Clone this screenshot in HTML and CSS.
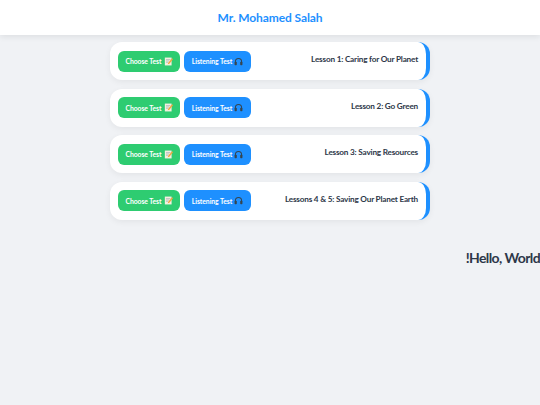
FILE: index.html
```html
<!DOCTYPE html>
<html lang="ar" dir="rtl">
<head>
<meta charset="utf-8">
<title>Mr. Mohamed Salah</title>
<link rel="stylesheet" href="styles.css">
</head>
<body>
<svg class="defs" width="0" height="0" aria-hidden="true">
  <symbol id="memo" viewBox="0 0 16 16">
    <rect x="1.5" y="1" width="12" height="14" fill="#f4efe0"/>
    <path d="M3.5 4.5h8M3.5 7h6M3.5 9.5h4" stroke="#9aa4ad" stroke-width="1"/>
    <path d="M14.5 2 7.5 10 6.5 13 9.5 11.8 16 4z" fill="#f2a53a"/>
  </symbol>
  <symbol id="phones" viewBox="0 0 16 16">
    <path d="M2.5 10V8a5.5 5.5 0 0 1 11 0v2" fill="none" stroke="#36454f" stroke-width="1.8"/>
    <rect x="1" y="8.5" width="4" height="6" rx="1.3" fill="#36454f"/>
    <rect x="11" y="8.5" width="4" height="6" rx="1.3" fill="#36454f"/>
  </symbol>
</svg>
<header class="site-header"><h1 class="site-title" dir="ltr">Mr. Mohamed Salah</h1></header>
<main class="lessons">
  <article class="lesson">
    <h2 class="lesson-title" dir="ltr">Lesson 1: Caring for Our Planet</h2>
    <div class="actions">
      <a class="btn btn-listen" dir="ltr">Listening Test<svg class="ico"><use href="#phones"/></svg></a>
      <a class="btn btn-choose" dir="ltr">Choose Test<svg class="ico"><use href="#memo"/></svg></a>
    </div>
  </article>
  <article class="lesson">
    <h2 class="lesson-title" dir="ltr">Lesson 2: Go Green</h2>
    <div class="actions">
      <a class="btn btn-listen" dir="ltr">Listening Test<svg class="ico"><use href="#phones"/></svg></a>
      <a class="btn btn-choose" dir="ltr">Choose Test<svg class="ico"><use href="#memo"/></svg></a>
    </div>
  </article>
  <article class="lesson">
    <h2 class="lesson-title" dir="ltr">Lesson 3: Saving Resources</h2>
    <div class="actions">
      <a class="btn btn-listen" dir="ltr">Listening Test<svg class="ico"><use href="#phones"/></svg></a>
      <a class="btn btn-choose" dir="ltr">Choose Test<svg class="ico"><use href="#memo"/></svg></a>
    </div>
  </article>
  <article class="lesson">
    <h2 class="lesson-title" dir="ltr">Lessons 4 &amp; 5: Saving Our Planet Earth</h2>
    <div class="actions">
      <a class="btn btn-listen" dir="ltr">Listening Test<svg class="ico"><use href="#phones"/></svg></a>
      <a class="btn btn-choose" dir="ltr">Choose Test<svg class="ico"><use href="#memo"/></svg></a>
    </div>
  </article>
</main>
<p class="hello">Hello, World!</p>
</body>
</html>
```

FILE: styles.css
```css
* { box-sizing: border-box; }
html, body { margin: 0; padding: 0; }
body {
  background: #f0f2f5;
  font-family: Lato, "Noto Sans", sans-serif;
  color: #2d3748;
  height: 405px;
  overflow: hidden;
}
.defs { display: block; height: 0; }
.site-header {
  height: 35px;
  background: #fff;
  box-shadow: 0 2px 6px rgba(0, 0, 0, 0.08);
  display: flex;
  align-items: center;
  justify-content: center;
}
.site-title {
  margin: 0 0 1px;
  font-size: 12px;
  font-weight: 700;
  letter-spacing: -0.1px;
  color: #1e90ff;
}
.lessons {
  width: 320px;
  margin: 7px auto 0;
  display: flex;
  flex-direction: column;
  gap: 8.5px;
}
.lesson {
  height: 38px;
  background: #fff;
  border-right: 4px solid #1e90ff;
  border-radius: 12px;
  box-shadow: 0 2px 6px rgba(0, 0, 0, 0.06);
  display: flex;
  align-items: center;
  justify-content: space-between;
  padding: 0 8px 0 8px;
}
.lesson-title {
  margin: 0 0 4px;
  font-size: 8.2px;
  font-weight: 700;
  letter-spacing: -0.2px;
  color: #2d3748;
}
.actions { display: flex; gap: 4px; }
.btn {
  height: 21px;
  border-radius: 6px;
  display: flex;
  align-items: center;
  justify-content: center;
  gap: 2px;
  color: #fff;
  font-size: 6.8px;
  font-weight: 700;
  letter-spacing: -0.05px;
  white-space: pre;
}
.btn-choose { width: 62px; background: #2ecc71; }
.btn-listen { width: 67px; background: #1e90ff; }
.ico { width: 9px; height: 9px; }
.hello {
  margin: 29px 0 0;
  font-size: 14px;
  font-weight: 700;
  letter-spacing: -0.6px;
  color: #2d3748;
}
```
